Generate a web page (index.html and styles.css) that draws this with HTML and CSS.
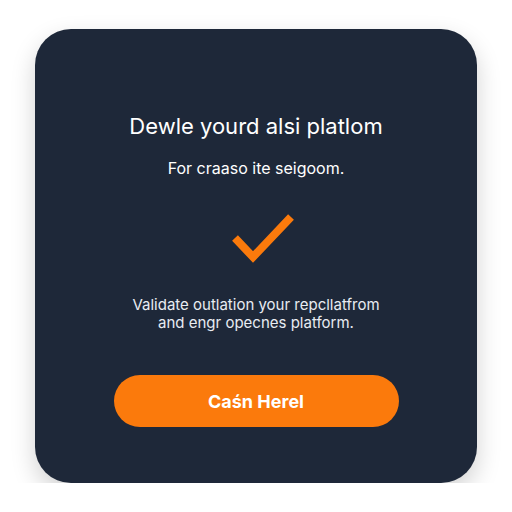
FILE: index.html
```html
<!DOCTYPE html>
<html lang="en">
<head>
    <meta charset="UTF-8">
    <meta name="viewport" content="width=device-width, initial-scale=1.0">
    <title>Platform</title>
    <link rel="stylesheet" href="styles.css">
</head>
<body>
    <div class="card">
        <h1 class="title">Dewle yourd alsi platlom</h1>
        <p class="subtitle">For craaso ite seigoom.</p>
        <svg class="check" width="80" height="52" viewBox="0 0 80 52">
            <polyline points="19,26 37,45 75,5" fill="none" stroke="#fb7a0c" stroke-width="8" stroke-linejoin="miter" stroke-linecap="butt"/>
        </svg>
        <p class="desc">Validate outlation your repcllatfrom<br>and engr opecnes platform.</p>
        <button class="btn">Caśn Herel</button>
    </div>
</body>
</html>
```

FILE: styles.css
```css
body {
    margin: 0;
    background: #ffffff;
    font-family: Inter, "Open Sans", sans-serif;
    display: flex;
    justify-content: center;
}
.card {
    margin-top: 29px;
    width: 442px;
    height: 454px;
    box-sizing: border-box;
    padding-top: 83px;
    background: #1e2839;
    border-radius: 36px;
    box-shadow: 0 10px 24px rgba(0, 0, 0, 0.18);
    display: flex;
    flex-direction: column;
    align-items: center;
    color: #ffffff;
}
.title {
    margin: 0;
    font-size: 22px;
    line-height: 28px;
    font-weight: 400;
}
.subtitle {
    margin: 18px 0 0;
    font-size: 16px;
    line-height: 20px;
}
.check {
    margin-top: 34px;
    display: block;
}
.desc {
    margin: 32px 0 0;
    font-size: 15px;
    line-height: 18px;
    text-align: center;
    color: #e8ecf2;
}
.btn {
    margin-top: 43px;
    width: 285px;
    height: 52px;
    border: none;
    border-radius: 26px;
    background: #fb7a0c;
    color: #ffffff;
    font-family: inherit;
    font-size: 18px;
    font-weight: 700;
}
```
